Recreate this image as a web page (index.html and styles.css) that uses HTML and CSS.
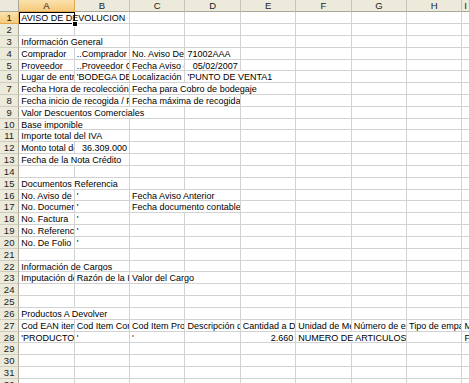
FILE: index.html
```html
<!DOCTYPE html>
<html lang="es">
<head>
<meta charset="utf-8">
<title>Aviso de Devolución</title>
<link rel="stylesheet" href="styles.css">
</head>
<body>
<div class="sheet">
  <div class="corner"></div>
  <div class="ch on">A</div><div class="ch">B</div><div class="ch">C</div><div class="ch">D</div><div class="ch">E</div><div class="ch">F</div><div class="ch">G</div><div class="ch">H</div><div class="ch">I</div>

  <div class="rh on">1</div><div class="c s2">AVISO DE DEVOLUCION</div><div class="c"></div><div class="c"></div><div class="c"></div><div class="c"></div><div class="c"></div><div class="c"></div><div class="c"></div>
  <div class="rh">2</div><div class="c"></div><div class="c"></div><div class="c"></div><div class="c"></div><div class="c"></div><div class="c"></div><div class="c"></div><div class="c"></div><div class="c"></div>
  <div class="rh">3</div><div class="c s2">Información General</div><div class="c"></div><div class="c"></div><div class="c"></div><div class="c"></div><div class="c"></div><div class="c"></div><div class="c"></div>
  <div class="rh">4</div><div class="c">Comprador</div><div class="c">..Comprador Comprador</div><div class="c">No. Aviso Devolución</div><div class="c">71002AAA</div><div class="c"></div><div class="c"></div><div class="c"></div><div class="c"></div><div class="c"></div>
  <div class="rh">5</div><div class="c">Proveedor</div><div class="c">..Proveedor Cod</div><div class="c">Fecha Aviso de Devolución</div><div class="c r">05/02/2007</div><div class="c"></div><div class="c"></div><div class="c"></div><div class="c"></div><div class="c"></div>
  <div class="rh">6</div><div class="c">Lugar de entrega</div><div class="c">'BODEGA DE COMPRAS</div><div class="c">Localización Lugar Entrega</div><div class="c s2">'PUNTO DE VENTA1</div><div class="c"></div><div class="c"></div><div class="c"></div><div class="c"></div>
  <div class="rh">7</div><div class="c s2">Fecha Hora de recolección</div><div class="c s3">Fecha para Cobro de bodegaje</div><div class="c"></div><div class="c"></div><div class="c"></div><div class="c"></div>
  <div class="rh">8</div><div class="c s2">Fecha inicio de recogida / Fecha fin</div><div class="c s2">Fecha máxima de recogida</div><div class="c"></div><div class="c"></div><div class="c"></div><div class="c"></div><div class="c"></div>
  <div class="rh">9</div><div class="c s3">Valor Descuentos Comerciales</div><div class="c"></div><div class="c"></div><div class="c"></div><div class="c"></div><div class="c"></div><div class="c"></div>
  <div class="rh">10</div><div class="c s2">Base imponible</div><div class="c"></div><div class="c"></div><div class="c"></div><div class="c"></div><div class="c"></div><div class="c"></div><div class="c"></div>
  <div class="rh">11</div><div class="c s2">Importe total del IVA</div><div class="c"></div><div class="c"></div><div class="c"></div><div class="c"></div><div class="c"></div><div class="c"></div><div class="c"></div>
  <div class="rh">12</div><div class="c">Monto total de la Nota</div><div class="c r">36.309.000</div><div class="c"></div><div class="c"></div><div class="c"></div><div class="c"></div><div class="c"></div><div class="c"></div><div class="c"></div>
  <div class="rh">13</div><div class="c s2">Fecha de la Nota Crédito</div><div class="c"></div><div class="c"></div><div class="c"></div><div class="c"></div><div class="c"></div><div class="c"></div><div class="c"></div>
  <div class="rh">14</div><div class="c"></div><div class="c"></div><div class="c"></div><div class="c"></div><div class="c"></div><div class="c"></div><div class="c"></div><div class="c"></div><div class="c"></div>
  <div class="rh">15</div><div class="c s2">Documentos Referencia</div><div class="c"></div><div class="c"></div><div class="c"></div><div class="c"></div><div class="c"></div><div class="c"></div><div class="c"></div>
  <div class="rh">16</div><div class="c">No. Aviso de Devolución</div><div class="c">'</div><div class="c s2">Fecha Aviso Anterior</div><div class="c"></div><div class="c"></div><div class="c"></div><div class="c"></div><div class="c"></div>
  <div class="rh">17</div><div class="c">No. Documento contable</div><div class="c">'</div><div class="c s2">Fecha documento contable</div><div class="c"></div><div class="c"></div><div class="c"></div><div class="c"></div><div class="c"></div>
  <div class="rh">18</div><div class="c">No. Factura</div><div class="c">'</div><div class="c"></div><div class="c"></div><div class="c"></div><div class="c"></div><div class="c"></div><div class="c"></div><div class="c"></div>
  <div class="rh">19</div><div class="c">No. Referencia</div><div class="c">'</div><div class="c"></div><div class="c"></div><div class="c"></div><div class="c"></div><div class="c"></div><div class="c"></div><div class="c"></div>
  <div class="rh">20</div><div class="c">No. De Folio</div><div class="c">'</div><div class="c"></div><div class="c"></div><div class="c"></div><div class="c"></div><div class="c"></div><div class="c"></div><div class="c"></div>
  <div class="rh">21</div><div class="c"></div><div class="c"></div><div class="c"></div><div class="c"></div><div class="c"></div><div class="c"></div><div class="c"></div><div class="c"></div><div class="c"></div>
  <div class="rh">22</div><div class="c s2">Información de Cargos</div><div class="c"></div><div class="c"></div><div class="c"></div><div class="c"></div><div class="c"></div><div class="c"></div><div class="c"></div>
  <div class="rh">23</div><div class="c">Imputación de Cargo</div><div class="c">Razón de la Imputación</div><div class="c s2">Valor del Cargo</div><div class="c"></div><div class="c"></div><div class="c"></div><div class="c"></div><div class="c"></div>
  <div class="rh">24</div><div class="c"></div><div class="c"></div><div class="c"></div><div class="c"></div><div class="c"></div><div class="c"></div><div class="c"></div><div class="c"></div><div class="c"></div>
  <div class="rh">25</div><div class="c"></div><div class="c"></div><div class="c"></div><div class="c"></div><div class="c"></div><div class="c"></div><div class="c"></div><div class="c"></div><div class="c"></div>
  <div class="rh">26</div><div class="c s2">Productos A Devolver</div><div class="c"></div><div class="c"></div><div class="c"></div><div class="c"></div><div class="c"></div><div class="c"></div><div class="c"></div>
  <div class="rh">27</div><div class="c">Cod EAN item devuelto</div><div class="c">Cod Item Comprador</div><div class="c">Cod Item Proveedor</div><div class="c">Descripción del item</div><div class="c">Cantidad a Devolver</div><div class="c">Unidad de Medida</div><div class="c">Número de empaques</div><div class="c">Tipo de empaque</div><div class="c">M</div>
  <div class="rh">28</div><div class="c">'PRODUCTOS</div><div class="c">'</div><div class="c">'</div><div class="c"></div><div class="c r">2.660</div><div class="c s2">NUMERO DE ARTICULOS</div><div class="c"></div><div class="c">F</div>
  <div class="rh">29</div><div class="c"></div><div class="c"></div><div class="c"></div><div class="c"></div><div class="c"></div><div class="c"></div><div class="c"></div><div class="c"></div><div class="c"></div>
  <div class="rh">30</div><div class="c"></div><div class="c"></div><div class="c"></div><div class="c"></div><div class="c"></div><div class="c"></div><div class="c"></div><div class="c"></div><div class="c"></div>
  <div class="rh">31</div><div class="c"></div><div class="c"></div><div class="c"></div><div class="c"></div><div class="c"></div><div class="c"></div><div class="c"></div><div class="c"></div><div class="c"></div>
  <div class="rh">32</div><div class="c"></div><div class="c"></div><div class="c"></div><div class="c"></div><div class="c"></div><div class="c"></div><div class="c"></div><div class="c"></div><div class="c"></div>

  <div class="sel"><span class="handle"></span></div>
</div>
</body>
</html>
```

FILE: styles.css
```css
html, body {
  margin: 0;
  padding: 0;
  background: #ffffff;
  overflow: hidden;
}

.sheet {
  position: relative;
  display: grid;
  grid-template-columns: 19.3px repeat(8, 55.4px) 7.5px;
  grid-template-rows: 12.2px repeat(32, 11.83px);
  width: 470px;
  height: 383px;
  overflow: hidden;
  font-family: "Liberation Sans", Arial, sans-serif;
  font-size: 9px;
  color: #000;
}

.corner {
  background: #ebe9dc;
  border-right: 1px solid #aca899;
  border-bottom: 1px solid #aca899;
  box-sizing: border-box;
}

.ch {
  background: #ebeadb;
  border-right: 1px solid #c7c4b5;
  border-bottom: 1px solid #aca899;
  box-sizing: border-box;
  text-align: center;
  line-height: 12px;
  font-size: 9.5px;
  color: #222;
  overflow: hidden;
}

.rh {
  background: #ebeadb;
  border-right: 1px solid #aca899;
  border-bottom: 1px solid #cfcdbf;
  box-sizing: border-box;
  text-align: center;
  line-height: 11.5px;
  font-size: 9.5px;
  color: #222;
}

.ch.on, .rh.on {
  background: linear-gradient(#fbe2ad, #f6c97a);
  border-color: #e0a94f;
}

.c {
  border-right: 1px solid #d2d2d2;
  border-bottom: 1px solid #d2d2d2;
  box-sizing: border-box;
  overflow: hidden;
  white-space: nowrap;
  padding: 0 1px 0 2px;
  line-height: 12px;
}

.c.r {
  text-align: right;
  padding-right: 2px;
}

.s2 { grid-column: span 2; }
.s3 { grid-column: span 3; }

.sel {
  position: absolute;
  left: 18.8px;
  top: 11.6px;
  width: 56.4px;
  height: 12.8px;
  border: 1.6px solid #000;
  box-sizing: border-box;
  pointer-events: none;
}

.handle {
  position: absolute;
  right: -3.5px;
  bottom: -3.5px;
  width: 4px;
  height: 4px;
  background: #000;
  border: 1px solid #fff;
}
```
